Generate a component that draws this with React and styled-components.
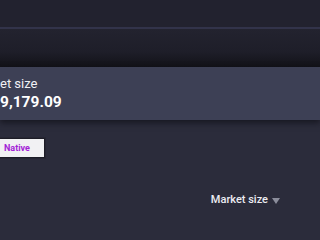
import styled, { createGlobalStyle } from 'styled-components'

const GlobalStyle = createGlobalStyle`
  html, body {
    margin: 0;
    padding: 0;
    background: #2b2c3b;
    font-family: Roboto, "Liberation Sans", sans-serif;
    overflow: hidden;
  }
`

const Page = styled.div`
  width: 320px;
  height: 214px;
  display: flex;
  flex-direction: column;
  background: #2b2c3b;
`

const TopBar = styled.div`
  height: 27px;
  background: #22222f;
  border-bottom: 2px solid #32334a;
`

const SubHeader = styled.div`
  height: 38px;
  background: linear-gradient(to bottom, #23232f 0%, #1e1e29 60%, #121218 100%);
`

const StatCard = styled.div`
  height: 53px;
  background: #3d4055;
  padding: 9px 0 0 0;
  box-sizing: border-box;
  display: flex;
  flex-direction: column;
  gap: 1px;
  box-shadow: 0 3px 6px rgba(10, 10, 16, 0.6);
  position: relative;
  z-index: 1;
`

const StatLabel = styled.div`
  font-size: 13px;
  line-height: 16px;
  color: #f1f1f5;
`

const StatValue = styled.div`
  font-size: 15.5px;
  font-weight: 700;
  line-height: 19px;
  color: #ffffff;
`

const Body = styled.div`
  flex: 1;
  display: flex;
  flex-direction: column;
  padding-top: 18px;
`

const FilterRow = styled.div`
  display: flex;
`

const Chip = styled.button`
  height: 20px;
  width: 47px;
  margin-left: -2px;
  box-sizing: border-box;
  border: 1px solid #1d1d27;
  outline: 1px solid #262633;
  background: #f1f1f3;
  color: #a322d6;
  font-family: Roboto, "Liberation Sans", sans-serif;
  font-size: 9px;
  font-weight: 700;
  text-align: left;
  padding: 0 0 0 5px;
  cursor: pointer;
`

const SortRow = styled.div`
  display: flex;
  justify-content: flex-end;
  padding-right: 40px;
  margin-top: 35px;
`

const SortButton = styled.div`
  display: flex;
  align-items: center;
  gap: 4px;
  font-size: 11px;
  font-weight: 500;
  color: #ececf2;
`

const Caret = styled.span`
  width: 0;
  height: 0;
  border-left: 4px solid transparent;
  border-right: 4px solid transparent;
  border-top: 6px solid #8b8d9b;
  margin-top: 2px;
`

export default function App () {
  return (
    <Page>
      <GlobalStyle />
      <TopBar />
      <SubHeader />
      <StatCard>
        <StatLabel>et size</StatLabel>
        <StatValue>9,179.09</StatValue>
      </StatCard>
      <Body>
        <FilterRow>
          <Chip>Native</Chip>
        </FilterRow>
        <SortRow>
          <SortButton>
            Market size
            <Caret />
          </SortButton>
        </SortRow>
      </Body>
    </Page>
  )
}
